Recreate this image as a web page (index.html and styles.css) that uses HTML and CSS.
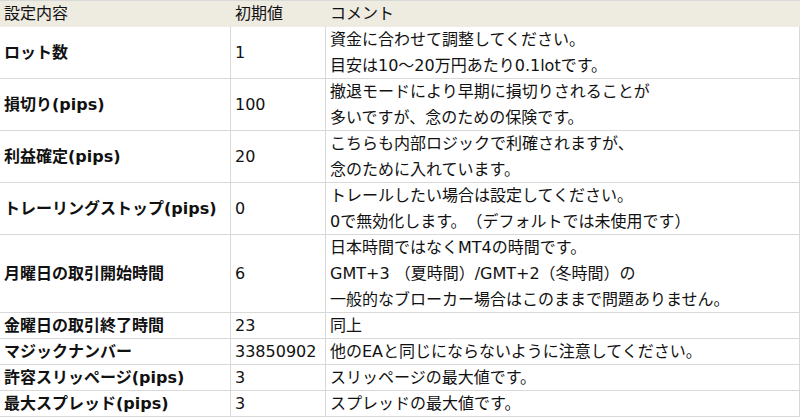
FILE: index.html
```html
<!DOCTYPE html>
<html lang="ja">
<head>
<meta charset="utf-8">
<title>設定内容</title>
<link rel="stylesheet" href="styles.css">
</head>
<body>
<div class="table">
  <div class="th">設定内容</div>
  <div class="th">初期値</div>
  <div class="th">コメント</div>

  <div class="td name"><div class="in">ロット数</div></div>
  <div class="td val"><div class="in">1</div></div>
  <div class="td note"><div class="in">資金に合わせて調整してください。<br>目安は10～20万円あたり0.1lotです。</div></div>

  <div class="td name"><div class="in">損切り(pips)</div></div>
  <div class="td val"><div class="in">100</div></div>
  <div class="td note"><div class="in">撤退モードにより早期に損切りされることが<br>多いですが、念のための保険です。</div></div>

  <div class="td name"><div class="in">利益確定(pips)</div></div>
  <div class="td val"><div class="in">20</div></div>
  <div class="td note"><div class="in">こちらも内部ロジックで利確されますが、<br>念のために入れています。</div></div>

  <div class="td name"><div class="in">トレーリングストップ(pips)</div></div>
  <div class="td val"><div class="in">0</div></div>
  <div class="td note"><div class="in">トレールしたい場合は設定してください。<br>0で無効化します。（デフォルトでは未使用です）</div></div>

  <div class="td name"><div class="in">月曜日の取引開始時間</div></div>
  <div class="td val"><div class="in">6</div></div>
  <div class="td note"><div class="in">日本時間ではなくMT4の時間です。<br>GMT+3 （夏時間）/GMT+2（冬時間）の<br>一般的なブローカー場合はこのままで問題ありません。</div></div>

  <div class="td name"><div class="in">金曜日の取引終了時間</div></div>
  <div class="td val"><div class="in">23</div></div>
  <div class="td note"><div class="in">同上</div></div>

  <div class="td name"><div class="in">マジックナンバー</div></div>
  <div class="td val"><div class="in">33850902</div></div>
  <div class="td note"><div class="in">他のEAと同じにならないように注意してください。</div></div>

  <div class="td name"><div class="in">許容スリッページ(pips)</div></div>
  <div class="td val"><div class="in">3</div></div>
  <div class="td note"><div class="in">スリッページの最大値です。</div></div>

  <div class="td name"><div class="in">最大スプレッド(pips)</div></div>
  <div class="td val"><div class="in">3</div></div>
  <div class="td note"><div class="in">スプレッドの最大値です。</div></div>
</div>
</body>
</html>
```

FILE: styles.css
```css
html, body {
  margin: 0;
  padding: 0;
  background: #ffffff;
}

body {
  font-family: "DejaVu Sans", "Noto Sans CJK JP", sans-serif;
  font-size: 16px;
  color: #111111;
  text-spacing-trim: space-all;
}

.table {
  display: grid;
  grid-template-columns: 231px 95px 474px;
  width: 800px;
  border-top: 1px solid #d9d9d9;
}

.th {
  background: #eeebe1;
  line-height: 26px;
  padding: 0 4px;
  white-space: nowrap;
}

.td {
  display: flex;
  align-items: center;
  box-sizing: border-box;
  border-right: 1px solid #d9d9d9;
  border-bottom: 1px solid #d9d9d9;
  padding: 0 4px;
  line-height: 26px;
  white-space: nowrap;
}

.td .in {
  margin-bottom: -1px;
}

.name {
  font-weight: bold;
}

.note {
  align-items: flex-start;
}
```
